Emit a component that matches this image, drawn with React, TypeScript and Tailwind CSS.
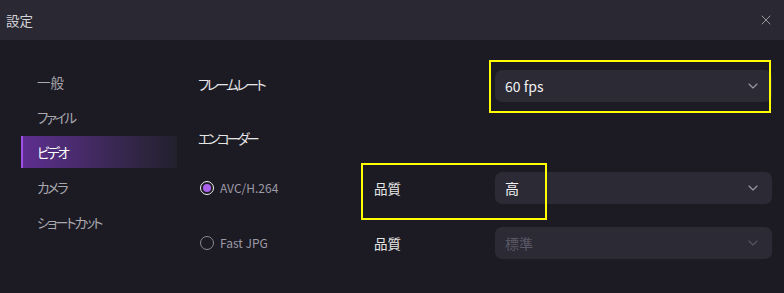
import { ChevronDown, X } from 'lucide-react'

const navItems = ['一般', 'ファイル', 'ビデオ', 'カメラ', 'ショートカット']

const kana = (s: string) => /^[\u30a0-\u30ff]+$/.test(s)

function SelectBox({ value, disabled }: { value: string; disabled?: boolean }) {
  return (
    <div className="flex h-8 w-[277px] items-center justify-between rounded-[7px] bg-[#2c2a35] pl-[10px] pr-[11px]">
      <span className={disabled ? 'text-[14px] text-[#5a5866]' : 'text-[14px] text-[#f2f2f2]'}>{value}</span>
      <ChevronDown
        size={16}
        strokeWidth={1.75}
        className={disabled ? 'text-[#55535f]' : 'text-[#9a98a3]'}
      />
    </div>
  )
}

function Radio({ checked }: { checked?: boolean }) {
  return checked ? (
    <span className="flex h-[14px] w-[14px] items-center justify-center rounded-full border-[1.5px] border-[#f0f0f0]">
      <span className="h-[8px] w-[8px] rounded-full bg-[#a962ec]" />
    </span>
  ) : (
    <span className="h-[14px] w-[14px] rounded-full border-[1.5px] border-[#8b8993]" />
  )
}

function EncoderRow({
  name,
  checked,
  quality,
  disabled,
}: {
  name: string
  checked?: boolean
  quality: string
  disabled?: boolean
}) {
  return (
    <div className="flex h-8 items-center">
      <div className="flex w-[176px] items-center gap-[6px] pl-[2px]">
        <Radio checked={checked} />
        <span className="text-[12px] text-[#9c9aa5]">{name}</span>
      </div>
      <span className="w-[121px] text-[13.5px] text-[#e6e6e6]">品質</span>
      <SelectBox value={quality} disabled={disabled} />
    </div>
  )
}

export default function App() {
  return (
    <div className="relative h-[293px] w-[784px] overflow-hidden bg-[#1c1b24] font-['Noto_Sans_CJK_JP','Noto_Sans',sans-serif] [font-feature-settings:'palt']">
      <div className="flex h-10 items-center justify-between bg-[#2a2933] pl-[6px] pr-[10px]">
        <span className="text-[13.5px] text-[#d4d3d8]">設定</span>
        <X size={16} strokeWidth={1.25} className="text-[#b0afb6]" />
      </div>

      <div className="flex">
        <nav className="flex w-[177px] flex-col gap-[3px] pl-[21px] pt-[26px]">
          {navItems.map((item) =>
            item === 'ビデオ' ? (
              <div
                key={item}
                className="flex h-8 items-center border-l-2 border-[#a052e6] bg-gradient-to-r from-[#5e2e90] to-[#22202d] pl-[14px] text-[13.5px] tracking-[-2.3px] text-white"
              >
                {item}
              </div>
            ) : (
              <div
                key={item}
                className={
                  kana(item)
                    ? 'flex h-8 items-center pl-4 text-[13.5px] tracking-[-2.2px] text-[#a9a8af]'
                    : 'flex h-8 items-center pl-4 text-[13.5px] text-[#a9a8af]'
                }
              >
                {item}
              </div>
            ),
          )}
        </nav>

        <main className="flex flex-1 flex-col pr-3 pl-[21px] pt-[30px]">
          <div className="flex h-8 items-center justify-between">
            <span className="-mt-[3px] text-[13.5px] tracking-[-2.6px] text-[#e6e6e6]">フレームレート</span>
            <SelectBox value="60 fps" />
          </div>
          <div className="mt-[26px] flex h-5 items-center text-[13.5px] tracking-[-3px] text-[#e6e6e6]">エンコーダー</div>
          <div className="mt-[24px]">
            <EncoderRow name="AVC/H.264" checked quality="高" />
          </div>
          <div className="mt-[23px]">
            <EncoderRow name="Fast JPG" quality="標準" disabled />
          </div>
        </main>
      </div>

      {/* annotation highlights */}
      <div className="pointer-events-none absolute left-[489px] top-[60px] h-[53px] w-[282px] border-2 border-[#ffff00]" />
      <div className="pointer-events-none absolute left-[361px] top-[163px] h-[57px] w-[186px] border-2 border-[#ffff00]" />
    </div>
  )
}
